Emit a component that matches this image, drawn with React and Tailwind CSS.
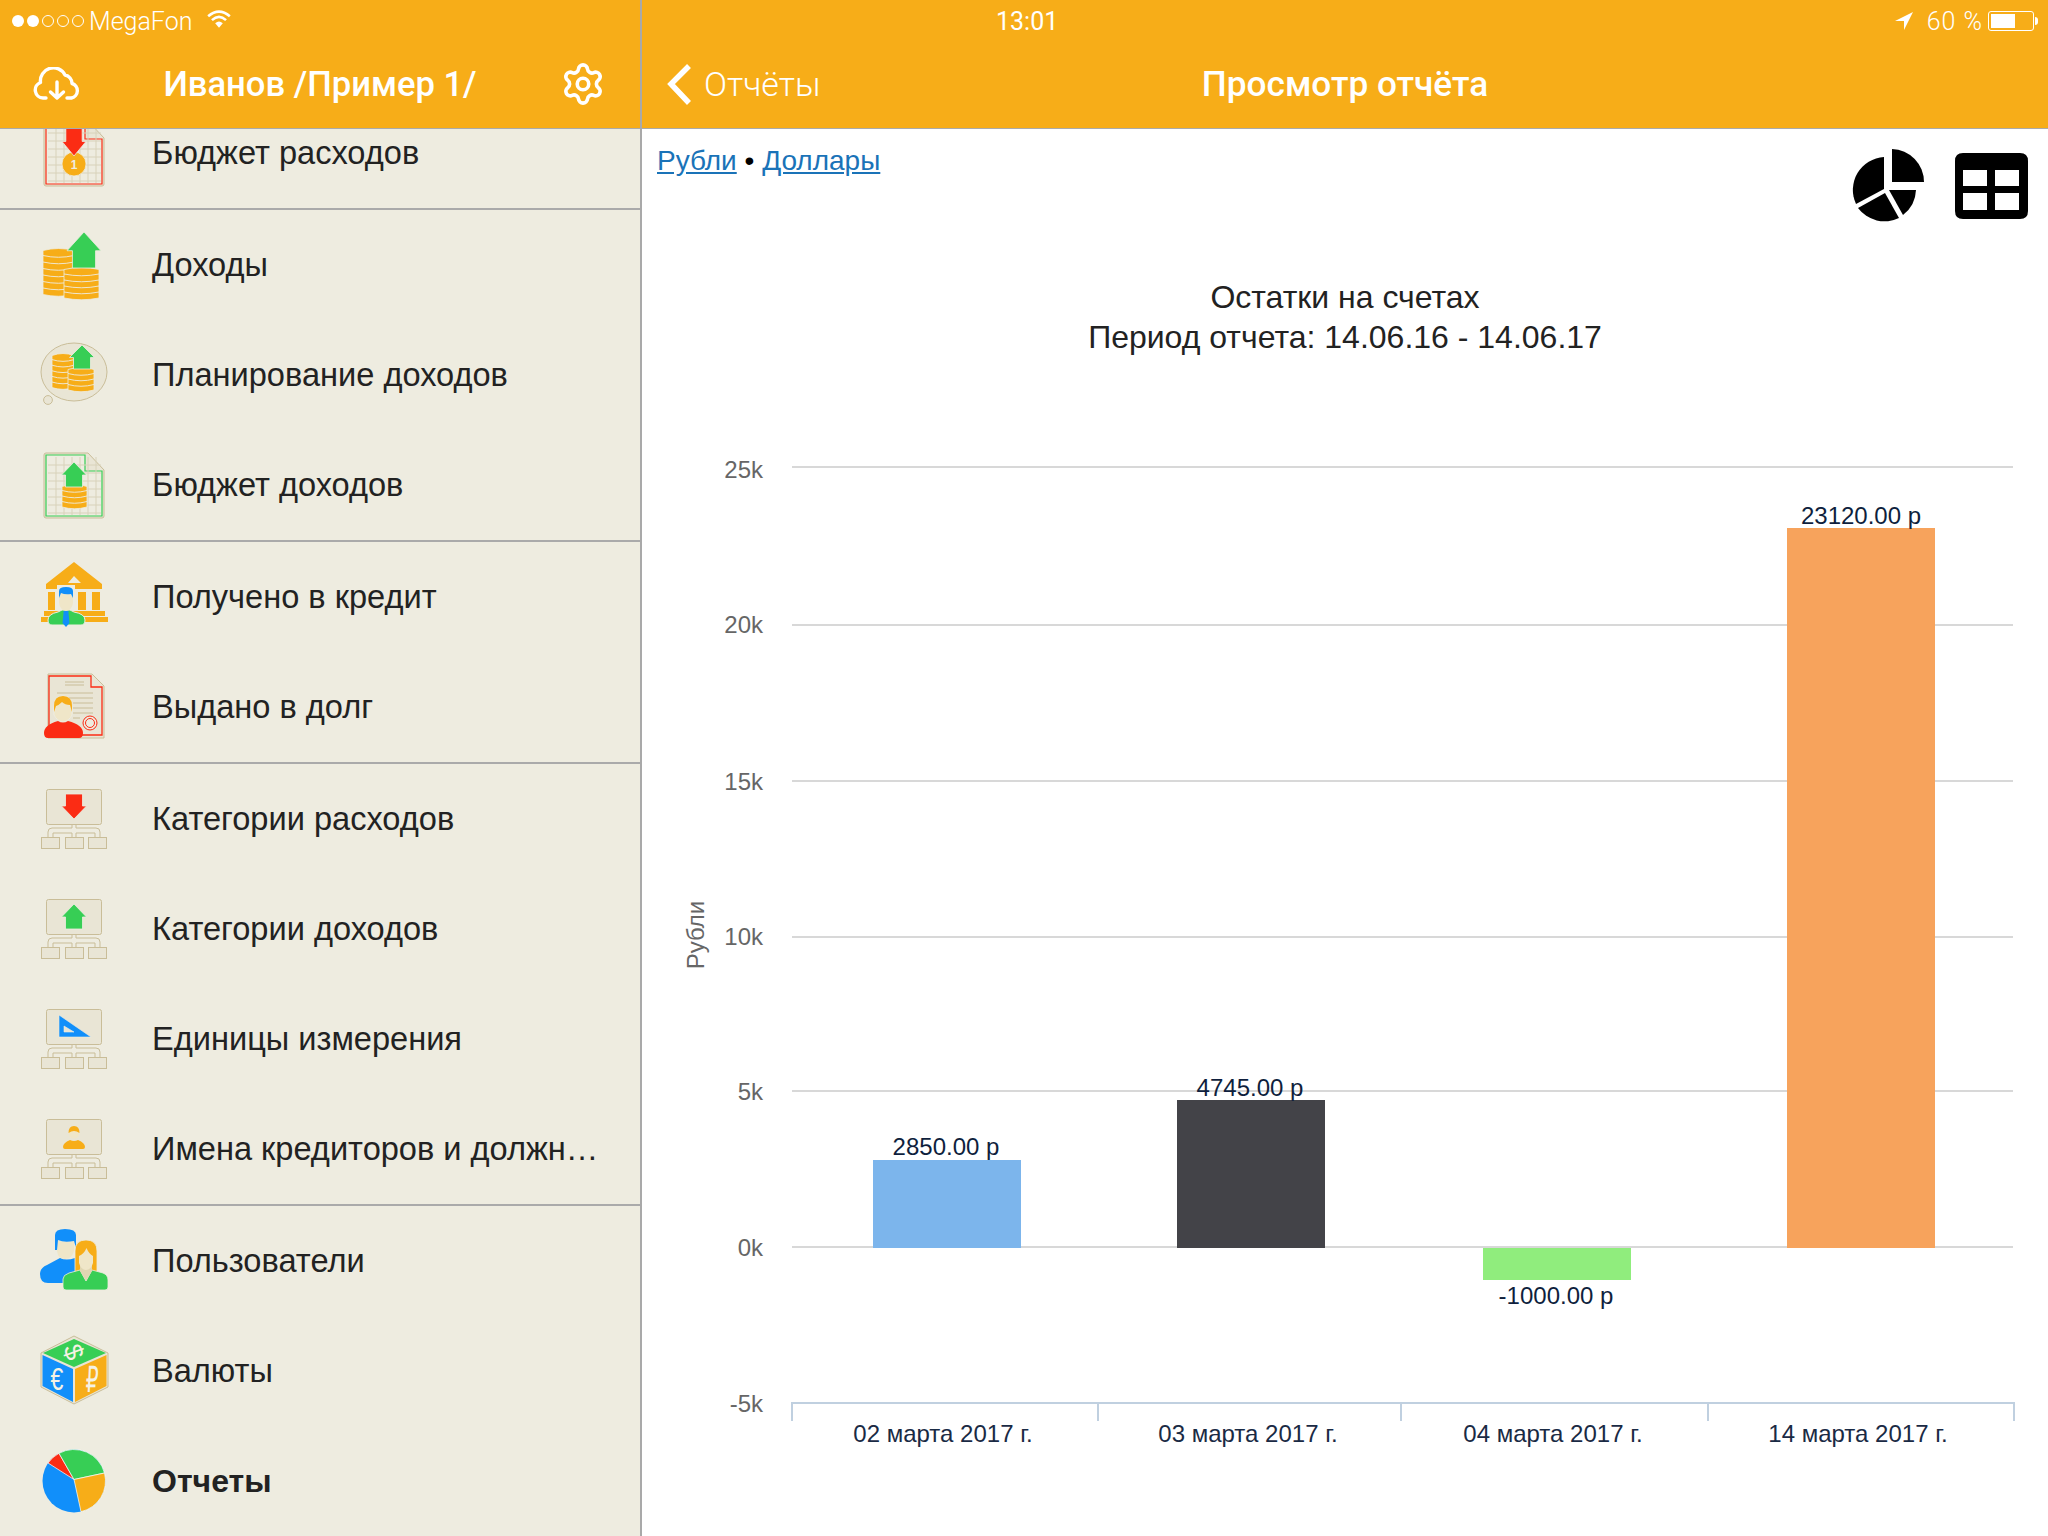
const ORANGE = "#f7ad18";
const GREEN = "#37ce55";
const RED = "#fb2c14";
const BLUE = "#118ffa";
const TAN = "#c9bd98";
const PAPER = "#e9e5d5";
const BG = "#eeece0";
const SKIN = "#efe6c8";

function Coins({ x, y, w, n, step = 6 }) {
  const cx = x + w / 2;
  const bottom = y + n * step;
  const lines = [];
  for (let i = 1; i < n; i++) {
    const ly = y + i * step;
    lines.push(`M${x} ${ly}Q${cx} ${ly + 3.5} ${x + w} ${ly}`);
  }
  return (
    <g>
      <path
        d={`M${x} ${y + 1.5}Q${cx} ${y - 2.5} ${x + w} ${y + 1.5}V${bottom}Q${cx} ${bottom + 3.5} ${x} ${bottom}Z`}
        fill={ORANGE}
        stroke={BG}
        strokeWidth="0.8"
      />
      <path d={lines.join("")} fill="none" stroke={BG} strokeWidth="0.9" />
    </g>
  );
}

// block arrow pointing up or down
function Arrow({ cx, top, w, h, color, down }) {
  const head = h * 0.52;
  const stem = w * 0.34;
  const d = down
    ? `M${cx - stem} ${top}H${cx + stem}V${top + h - head}H${cx + w / 2}L${cx} ${top + h}L${cx - w / 2} ${top + h - head}H${cx - stem}Z`
    : `M${cx} ${top}L${cx + w / 2} ${top + head}H${cx + stem}V${top + h}H${cx - stem}V${top + head}H${cx - w / 2}Z`;
  return <path d={d} fill={color} stroke={BG} strokeWidth="0.8" strokeLinejoin="round" />;
}

function Grid({ x, y, w, h, step = 8 }) {
  const lines = [];
  for (let i = x + step; i < x + w; i += step) lines.push(`M${i} ${y}V${y + h}`);
  for (let j = y + step; j < y + h; j += step) lines.push(`M${x} ${j}H${x + w}`);
  return <path d={lines.join("")} stroke="#d8d2ba" strokeWidth="1" fill="none" />;
}

function DocFrame({ color }) {
  return (
    <>
      <path d="M12 8H54L70 25V71Q70 73 68 73H12Q10 73 10 71V10Q10 8 12 8Z" fill={PAPER} stroke={TAN} strokeWidth="1" />
      <path d="M12 10H51V26H68V71H12Z" fill={BG} stroke={color} strokeWidth="1.2" />
    </>
  );
}

function TreeBase({ children }) {
  return (
    <svg viewBox="0 0 80 80" className="w-20 h-20">
      <rect x="12.5" y="10.5" width="55" height="35" rx="2" fill={PAPER} stroke={TAN} strokeWidth="1" />
      <path
        d="M38 46V49H18Q14 49 14 53V58M42 46V49H62Q66 49 66 53V58M19 58V54H38V58M42 58V54H61V58"
        fill="none"
        stroke={TAN}
        strokeWidth="1"
      />
      <rect x="7.5" y="58.5" width="18" height="11" fill={PAPER} stroke={TAN} strokeWidth="1" />
      <rect x="31.5" y="58.5" width="18" height="11" fill={PAPER} stroke={TAN} strokeWidth="1" />
      <rect x="54.5" y="58.5" width="18" height="11" fill={PAPER} stroke={TAN} strokeWidth="1" />
      {children}
    </svg>
  );
}

const Svg = ({ children }) => (
  <svg viewBox="0 0 80 80" className="w-20 h-20">
    {children}
  </svg>
);

const icons = {
  budgetOut: (
    <Svg>
      <DocFrame color={RED} />
      <Grid x={14} y={12} w={53} h={58} />
      <ellipse cx="40" cy="51" rx="12" ry="12" fill={ORANGE} stroke={BG} strokeWidth="0.8" />
      <text x="40" y="56" textAnchor="middle" fontSize="12" fontWeight="700" fill={BG}>1</text>
      <Arrow cx={40} top={15} w={24} h={28} color={RED} down />
    </Svg>
  ),
  income: (
    <Svg>
      <Coins x={9} y={24} w={31} n={7} step={6.5} />
      <Coins x={30} y={43} w={35} n={5} />
      <Arrow cx={50} top={7} w={34} h={36} color={GREEN} />
    </Svg>
  ),
  planIncome: (
    <Svg>
      <ellipse cx="40" cy="37" rx="33" ry="29" fill={PAPER} stroke={TAN} strokeWidth="1" />
      <circle cx="14" cy="65" r="4.4" fill={PAPER} stroke={TAN} strokeWidth="1" />
      <Coins x={18} y={19} w={22} n={6} step={5.6} />
      <Coins x={34} y={33} w={26} n={4} step={5.5} />
      <Arrow cx={48} top={10} w={25} h={24} color={GREEN} />
    </Svg>
  ),
  budgetIn: (
    <Svg>
      <DocFrame color={GREEN} />
      <Grid x={14} y={12} w={53} h={58} />
      <Coins x={28} y={40} w={25} n={4} step={5.5} />
      <Arrow cx={40} top={17} w={25} h={25} color={GREEN} />
    </Svg>
  ),
  bank: (
    <Svg>
      <path d="M40 5L68 27V32H12V27ZM40 19L34 26H47Z" fill={ORANGE} fillRule="evenodd" />
      <path d="M14 35H21V53H14ZM44 35H52V53H44ZM58 35H66V53H58ZM10 54H71V59H10ZM7 60H74V65H7Z" fill={ORANGE} />
      <path d="M23 28H41V54H23Z" fill={BG} />
      <path d="M14 63Q14 57 24 55L28 53H36L40 55Q51 57 51 63Q51 68 47 68H18Q14 68 14 63Z" fill={GREEN} stroke={BG} strokeWidth="1" />
      <path d="M25 34H39V46Q38 53 32 54Q26 53 25 46Z" fill={SKIN} />
      <path d="M25 41V34Q25 30 32 30Q39 30 39 34V41L37 37Q31 38 27 36Z" fill={BLUE} />
      <path d="M29.500 54H34.500V56L35.500 66L32 70L28.500 66L29.500 56Z" fill={BLUE} />
    </Svg>
  ),
  contract: (
    <Svg>
      <path d="M14 7H58L70 19V71H14Z" fill={PAPER} stroke={TAN} strokeWidth="1" />
      <path d="M15 9H57V20H68V68H15Z" fill="none" stroke={RED} strokeWidth="1.3" />
      <path d="M31 15H50M31 18H50M23 26H59M23 31H59M39 36H59M39 41H59M39 46H59M39 51H46" stroke={TAN} strokeWidth="1" />
      <circle cx="56" cy="56" r="7" fill={BG} stroke={RED} strokeWidth="1" />
      <circle cx="56" cy="56" r="4.5" fill="none" stroke={RED} strokeWidth="1" />
      <path d="M20 40Q20 29 29 29Q38 29 38 40V48Q35 54 29 55Q23 54 20 48Z" fill={SKIN} stroke={BG} strokeWidth="1" />
      <path d="M20 45V39Q20 29 29 29Q38 29 38 39V45L36 38Q31 38 28 35Q25 38 22 39Z" fill={ORANGE} />
      <path d="M10 66Q10 58 24 54Q29 57 34 54Q49 58 49 66Q49 71 45 71H14Q10 71 10 66Z" fill={RED} />
    </Svg>
  ),
  catOut: (
    <TreeBase>
      <Arrow cx={40} top={15} w={25} h={25} color={RED} down />
    </TreeBase>
  ),
  catIn: (
    <TreeBase>
      <Arrow cx={40} top={15} w={25} h={25} color={GREEN} />
    </TreeBase>
  ),
  units: (
    <TreeBase>
      <path d="M25 16V38H57ZM30 27V33H40Z" fill={BLUE} fillRule="evenodd" stroke={BG} strokeWidth="0.6" />
    </TreeBase>
  ),
  creditors: (
    <TreeBase>
      <circle cx="40" cy="24" r="5.5" fill={SKIN} />
      <path d="M34.500 24Q34.500 17 40 17Q45.500 17 45.500 24Q40 20 34.500 24Z" fill={ORANGE} />
      <path d="M29 38Q29 34 36 31Q40 33 44 31Q51 34 51 38Q51 40 49 40H31Q29 40 29 38Z" fill={ORANGE} />
    </TreeBase>
  ),
  users: (
    <Svg>
      <path d="M6 53Q6 47 13 44L26 37Q32 40 41 37V62H14Q6 62 6 53Z" fill={BLUE} />
      <path d="M23 19Q30 22 40 20V30Q38 38 31 38Q24 38 23 30Z" fill={SKIN} />
      <path d="M21 29V14Q21 8 31 8Q42 8 42 14V27L40 20Q30 22 24 19L23 29Z" fill={BLUE} />
      <path d="M41 51V30Q41 19 52 19Q63 19 63 30V51Z" fill={ORANGE} stroke={BG} strokeWidth="0.8" />
      <path d="M29 58Q29 54 35 52L46 49L52 60L58 49L69 52Q74 54 74 59V66Q74 69 71 69H32Q29 69 29 66Z" fill={GREEN} stroke={BG} strokeWidth="0.8" />
      <path d="M46 44H58V50L52 60L46 50Z" fill="#e0d6b2" />
      <path d="M45 35Q50 33 52.500 27Q55 33 59 35V42Q57 49 52 49Q47 49 45 42Z" fill={SKIN} />
    </Svg>
  ),
  cube: (
    <Svg>
      <path d="M40 5L74 22V56L40 73L7 56V22Z" fill={PAPER} stroke={TAN} strokeWidth="1" />
      <path d="M40 8L72 22L40 36L9 22Z" fill={GREEN} />
      <path d="M8.500 24L39 38V71L8.500 55Z" fill={BLUE} />
      <path d="M41 38L72.500 24V55L41 71Z" fill={ORANGE} />
      <text textAnchor="middle" fontSize="26" fill="#f5f2e4" transform="translate(40 21) rotate(70) translate(0 9)">$</text>
      <text textAnchor="middle" fontSize="32" fill="#f5f2e4" transform="translate(23 59) scale(0.72 1)">€</text>
      <text textAnchor="middle" fontSize="36" fill="#f5f2e4" fontFamily="'DejaVu Sans', sans-serif" transform="translate(57.5 61) scale(0.55 1) skewX(-5)">₽</text>
    </Svg>
  ),
  pie: (
    <Svg>
      <circle cx="40" cy="40" r="31.5" fill={BLUE} />
      <path d="M40 38.500L14 22A31.500 31.500 0 0 1 25 12.300Z" fill={RED} stroke="#fff" strokeWidth="0.7" />
      <path d="M40 38.500L25 12.300A31.500 31.500 0 0 1 70.500 32Z" fill={GREEN} stroke="#fff" strokeWidth="0.7" />
      <path d="M40 38.500L70.500 32A31.500 31.500 0 0 1 47 70.700Z" fill={ORANGE} stroke="#fff" strokeWidth="0.7" />
    </Svg>
  ),
};

const groups = [
  [{ label: "Бюджет расходов", icon: "budgetOut" }],
  [
    { label: "Доходы", icon: "income" },
    { label: "Планирование доходов", icon: "planIncome" },
    { label: "Бюджет доходов", icon: "budgetIn" },
  ],
  [
    { label: "Получено в кредит", icon: "bank" },
    { label: "Выдано в долг", icon: "contract" },
  ],
  [
    { label: "Категории расходов", icon: "catOut" },
    { label: "Категории доходов", icon: "catIn" },
    { label: "Единицы измерения", icon: "units" },
    { label: "Имена кредиторов и должн…", icon: "creditors" },
  ],
  [
    { label: "Пользователи", icon: "users" },
    { label: "Валюты", icon: "cube" },
    { label: "Отчеты", icon: "pie", active: true },
  ],
];

function Row({ item }) {
  return (
    <div className="h-[110px] flex items-center pl-[34px]">
      <div className="w-20 h-20 shrink-0">{icons[item.icon]}</div>
      <span className={`ml-[38px] text-[#222] ${item.active ? "text-[32px] font-bold" : "text-[32.6px]"}`}>
        {item.label}
      </span>
    </div>
  );
}

function Sidebar() {
  return (
    <aside className="w-[642px] h-full shrink-0 bg-[#eeece0] border-r-2 border-[#a9a9a9] overflow-hidden flex flex-col">
      <header className="relative z-10 h-[129px] shrink-0 bg-[#f7ad18] border-b border-[#aaa] text-white">
        <div className="h-[44px] flex items-center pl-3 text-[25px] gap-[5px]">
          <div className="flex gap-[3px] -translate-y-[1px]">
            <span className="w-[12px] h-[12px] rounded-full bg-white" />
            <span className="w-[12px] h-[12px] rounded-full bg-white" />
            <span className="w-[12px] h-[12px] rounded-full border border-white" />
            <span className="w-[12px] h-[12px] rounded-full border border-white" />
            <span className="w-[12px] h-[12px] rounded-full border border-white" />
          </div>
          <span className="font-['Roboto',sans-serif] font-light">MegaFon</span>
          <svg viewBox="0 0 24 18" className="w-[26px] h-[20px] ml-[9px] -translate-y-[3px]" fill="none" stroke="white" strokeWidth="2.4">
            <path d="M2 6.500Q12 -2 22 6.500M5.500 10Q12 4 18.500 10" />
            <path d="M8.500 13Q12 9.500 15.500 13L12 17Z" fill="white" stroke="none" />
          </svg>
        </div>
        <div className="h-[84px] -mt-[2px] grid grid-cols-[110px_1fr_110px] items-center">
          <svg viewBox="0 0 48 34" className="w-[48px] h-[34px] ml-[33px]" fill="none" stroke="white" strokeWidth="3.4" strokeLinecap="round" strokeLinejoin="round">
            <path d="M13 31H10A8 8 0 0 1 7.500 15.500A13 13 0 0 1 32 8A8.500 8.500 0 0 1 39 16.500A7.500 7.500 0 0 1 38.500 31H34" />
            <path d="M24 15V31M17.500 25L24 31L30.500 25" />
          </svg>
          <h1 className="text-center text-[34.6px] font-medium font-['Roboto',sans-serif] translate-y-[1px]">Иванов /Пример 1/</h1>
          <svg viewBox="0 0 24 24" className="w-[46px] h-[46px] ml-[30px]" fill="none" stroke="white" strokeWidth="1.9" strokeLinecap="round" strokeLinejoin="round">
            <path d="M9.671 4.136a2.340 2.340 0 0 1 4.659 0 2.340 2.340 0 0 0 3.319 1.915 2.340 2.340 0 0 1 2.330 4.033 2.340 2.340 0 0 0 0 3.831 2.340 2.340 0 0 1-2.330 4.033 2.340 2.340 0 0 0-3.319 1.915 2.340 2.340 0 0 1-4.659 0 2.340 2.340 0 0 0-3.320-1.915 2.340 2.340 0 0 1-2.330-4.033 2.340 2.340 0 0 0 0-3.831A2.340 2.340 0 0 1 6.351 6.051a2.340 2.340 0 0 0 3.320-1.915" />
            <circle cx="12" cy="12" r="3" />
          </svg>
        </div>
      </header>
      <nav className="-mt-[31px]">
        {groups.map((group, i) => (
          <div key={i} className={i < groups.length - 1 ? "border-b-2 border-[#aaa]" : ""}>
            {group.map((item) => (
              <Row key={item.label} item={item} />
            ))}
          </div>
        ))}
      </nav>
    </aside>
  );
}

const yTicks = [
  ["25k", 467, 11],
  ["20k", 625, 8],
  ["15k", 781, 9],
  ["10k", 937, 8],
  ["5k", 1091, 9],
  ["0k", 1247, 9],
];

const bars = [
  { x: 873, top: 1160, color: "#7cb5ec", label: "2850.00 р", lx: 946, ly: 1155 },
  { x: 1177, top: 1100, color: "#434348", label: "4745.00 р", lx: 1250, ly: 1096 },
  { x: 1787, top: 528, color: "#f7a35c", label: "23120.00 р", lx: 1861, ly: 524 },
];

const xLabels = [
  ["02 марта 2017 г.", 943],
  ["03 марта 2017 г.", 1248],
  ["04 марта 2017 г.", 1553],
  ["14 марта 2017 г.", 1858],
];

function Chart() {
  return (
    <svg viewBox="642 240 1406 1296" className="w-[1406px] h-[1296px] block">
      <text x="1345" y="308" textAnchor="middle" fontSize="32" fill="#222">Остатки на счетах</text>
      <text x="1345" y="348" textAnchor="middle" fontSize="32" fill="#222">Период отчета: 14.06.16 - 14.06.17</text>
      <text transform="translate(704 935) rotate(-90)" textAnchor="middle" fontSize="24" fill="#666">Рубли</text>
      {yTicks.map(([label, y, dy]) => (
        <g key={label}>
          <line x1="792" x2="2013" y1={y} y2={y} stroke="#d8d8d8" strokeWidth="2" />
          <text x="763" y={y + dy} textAnchor="end" fontSize="24" fill="#666">{label}</text>
        </g>
      ))}
      <text x="763" y="1412" textAnchor="end" fontSize="24" fill="#666">-5k</text>
      <path d="M792 1421V1403H2014V1421M1098 1403V1421M1401 1403V1421M1708 1403V1421" fill="none" stroke="#c0d0e0" strokeWidth="2" />
      {bars.map((b) => (
        <g key={b.label}>
          <rect x={b.x} y={b.top} width="148" height={1248 - b.top} fill={b.color} />
          <text x={b.lx} y={b.ly} textAnchor="middle" fontSize="24" fill="#0f1f3d">{b.label}</text>
        </g>
      ))}
      <rect x="1483" y="1248" width="148" height="32" fill="#90ed7d" />
      <text x="1556" y="1304" textAnchor="middle" fontSize="24" fill="#0f1f3d">-1000.00 р</text>
      {xLabels.map(([label, x]) => (
        <text key={label} x={x} y="1442" textAnchor="middle" fontSize="24" fill="#1a2a44">{label}</text>
      ))}
    </svg>
  );
}

function Main() {
  return (
    <main className="flex-1 h-full flex flex-col bg-white">
      <header className="h-[129px] shrink-0 bg-[#f7ad18] border-b border-[#aaa] text-white">
        <div className="h-[44px] flex items-center justify-between pl-[354px] pr-[10px] text-[25px] font-['Roboto',sans-serif]">
          <span>13:01</span>
          <div className="flex items-center -translate-y-[1px]">
            <svg viewBox="0 0 20 20" className="w-5 h-5 mr-[13px]" fill="white">
              <path d="M19 1L1 10H10V19Z" />
            </svg>
            <span className="font-light tracking-[1px] mr-[5px] translate-y-[1px]">60 %</span>
            <div className="w-[46px] h-[20px] border border-white rounded-[3px] p-[2px]">
              <div className="h-full w-[60%] bg-white" />
            </div>
            <div className="w-[3px] h-[8px] bg-white rounded-r-sm ml-[1px]" />
          </div>
        </div>
        <div className="h-[84px] -mt-[2px] grid grid-cols-[1fr_auto_1fr] items-center">
          <div className="flex items-center pl-[24px]">
            <svg viewBox="0 0 26 42" className="w-[26px] h-[42px]" fill="none" stroke="white" strokeWidth="5.500">
              <path d="M23 3L5 21L23 40" />
            </svg>
            <span className="ml-[12px] text-[34px] font-['Roboto',sans-serif] font-light">Отчёты</span>
          </div>
          <h2 className="text-[35.2px] font-medium font-['Roboto',sans-serif]">Просмотр отчёта</h2>
          <div />
        </div>
      </header>
      <div className="h-[111px] shrink-0 flex justify-between pl-[15px] pr-[20px]">
        <div className="pt-[11px] text-[28px] text-black">
          <a className="text-[#1a73b8] underline">Рубли</a>
          <span> • </span>
          <a className="text-[#1a73b8] underline">Доллары</a>
        </div>
        <div className="flex items-start pt-[20px] gap-[30px]">
          <svg viewBox="0 0 74 74" className="w-[74px] h-[74px]">
            <path d="M41 0A33 33 0 0 1 73 33H41Z" />
            <path d="M33 8V40L5 55A33 33 0 0 1 33 8Z" />
            <path d="M7 59L34 44L48 69A33 33 0 0 1 7 59Z" />
            <path d="M38 41H65A33 33 0 0 1 52 66Z" />
          </svg>
          <svg viewBox="0 0 73 66" className="w-[73px] h-[66px] mt-[4px]">
            <path
              fillRule="evenodd"
              d="M8 0H65Q73 0 73 8V58Q73 66 65 66H8Q0 66 0 58V8Q0 0 8 0ZM8 17V33H32V17ZM40 17V33H64V17ZM8 40V57H32V40ZM40 40V57H64V40Z"
            />
          </svg>
        </div>
      </div>
      <Chart />
    </main>
  );
}

export default function App() {
  return (
    <div className="w-[2048px] h-[1536px] flex overflow-hidden font-['Liberation_Sans',Arial,sans-serif]">
      <Sidebar />
      <Main />
    </div>
  );
}
